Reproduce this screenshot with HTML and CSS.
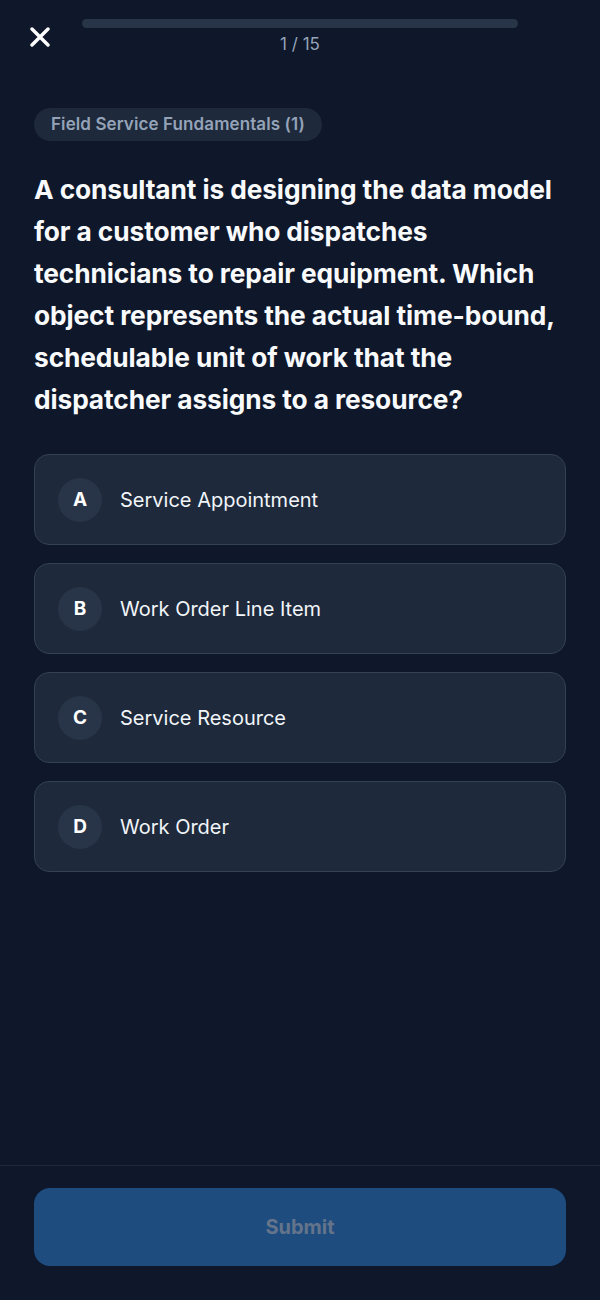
FILE: index.html
```html
<!DOCTYPE html>
<html lang="en">
<head>
<meta charset="utf-8">
<title>Quiz</title>
<link rel="stylesheet" href="styles.css">
</head>
<body>
<div class="page">
  <header class="top">
    <button class="close" aria-label="Close">
      <svg width="20" height="20" viewBox="0 0 20 20"><path d="M2 2 L18 18 M18 2 L2 18" stroke="#fff" stroke-width="3.4" stroke-linecap="round"/></svg>
    </button>
    <div class="progress">
      <div class="track"></div>
      <div class="count">1 / 15</div>
    </div>
    <div class="spacer"></div>
  </header>
  <main class="main">
    <span class="chip">Field Service Fundamentals (1)</span>
    <h1 class="question">A consultant is designing the data model for a customer who dispatches technicians to repair equipment. Which object represents the actual time-bound, schedulable unit of work that the dispatcher assigns to a resource?</h1>
    <div class="options">
      <div class="option"><span class="letter">A</span><span class="label">Service Appointment</span></div>
      <div class="option"><span class="letter">B</span><span class="label">Work Order Line Item</span></div>
      <div class="option"><span class="letter">C</span><span class="label">Service Resource</span></div>
      <div class="option"><span class="letter">D</span><span class="label">Work Order</span></div>
    </div>
  </main>
  <footer class="footer">
    <button class="submit">Submit</button>
  </footer>
</div>
</body>
</html>
```
FILE: styles.css
```css
* { box-sizing: border-box; }
html, body { margin: 0; padding: 0; background: #0f172a; }
body { font-family: Inter, "Noto Sans", sans-serif; color: #f8fafc; }
.page { height: 1300px; display: flex; flex-direction: column; }
.top { display: grid; grid-template-columns: 82px 1fr 82px; padding-top: 19px; }
.close { background: none; border: 0; padding: 0; margin: 8px 0 0 30px; width: 20px; height: 20px; cursor: pointer; }
.close svg { display: block; }
.progress { display: flex; flex-direction: column; align-items: center; }
.track { width: 100%; height: 9px; border-radius: 5px; background: #283548; }
.count { margin-top: 6px; font-size: 17px; color: #94a3b8; line-height: 20px; }
.main { flex: 1; padding: 54px 34px 0; }
.chip { display: inline-block; height: 33px; line-height: 33px; padding: 0 17px; border-radius: 17px; background: #1e293b; color: #94a3b8; font-size: 17px; font-weight: 600; letter-spacing: 0.1px; }
.question { margin: 28px 0 0; font-size: 26.3px; line-height: 42px; font-weight: 700; color: #f8fafc; letter-spacing: -0.1px; }
.options { margin-top: 33px; display: flex; flex-direction: column; gap: 18px; }
.option { height: 91px; display: flex; align-items: center; padding: 0 23px; border: 1px solid #334155; border-radius: 15px; background: #1e293b; }
.letter { width: 44px; height: 44px; border-radius: 50%; background: #283548; display: flex; align-items: center; justify-content: center; font-weight: 700; font-size: 19px; color: #fff; flex-shrink: 0; }
.label { margin-left: 18px; font-size: 20px; color: #f1f5f9; }
.footer { border-top: 1px solid #1e293b; padding: 22px 34px 34px; }
.submit { width: 100%; height: 78px; border: 0; border-radius: 16px; background: #1e4c7f; color: #64748b; font-family: inherit; font-size: 20px; font-weight: 700; }
```
